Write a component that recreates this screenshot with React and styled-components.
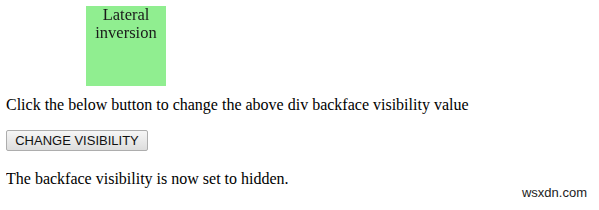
import React from "react";
import styled, { createGlobalStyle } from "styled-components";

const Global = createGlobalStyle`
  body {
    margin: 6px;
    font-family: "Liberation Serif", "Times New Roman", serif;
    font-size: 16px;
    color: #000;
    background: #fff;
  }
`;

const Page = styled.div`
  position: relative;
  height: 198px;
`;

const Card = styled.div`
  width: 80px;
  height: 80px;
  margin-left: 80px;
  background: #90ee90;
  text-align: center;
  line-height: 18px;
  font-size: 16.5px;
  color: #1a1a1a;
  backface-visibility: hidden;
`;

const Line = styled.span`
  display: block;
`;

const Text = styled.p`
  margin: ${(p) => p.$top}px 0 0;
  line-height: 18px;
`;

const Button = styled.button`
  display: block;
  margin-top: 16px;
  height: 21px;
  width: 142px;
  padding: 0;
  font-family: "Liberation Sans", Arial, sans-serif;
  font-size: 13px;
  color: #111;
  background: linear-gradient(#f6f6f6, #dddddd);
  border: 1px solid #adadad;
  border-radius: 2px;
`;

const Watermark = styled.span`
  position: absolute;
  right: 6px;
  bottom: 4px;
  font-family: "Liberation Sans", Arial, sans-serif;
  font-size: 13px;
  color: #222;
`;

export default function App() {
  return (
    <>
      <Global />
      <Page>
        <Card>
          <Line>Lateral</Line>
          <Line>inversion</Line>
        </Card>
        <Text $top={10}>
          Click the below button to change the above div backface visibility value
        </Text>
        <Button>CHANGE VISIBILITY</Button>
        <Text $top={19}>The backface visibility is now set to hidden.</Text>
        <Watermark>wsxdn.com</Watermark>
      </Page>
    </>
  );
}
